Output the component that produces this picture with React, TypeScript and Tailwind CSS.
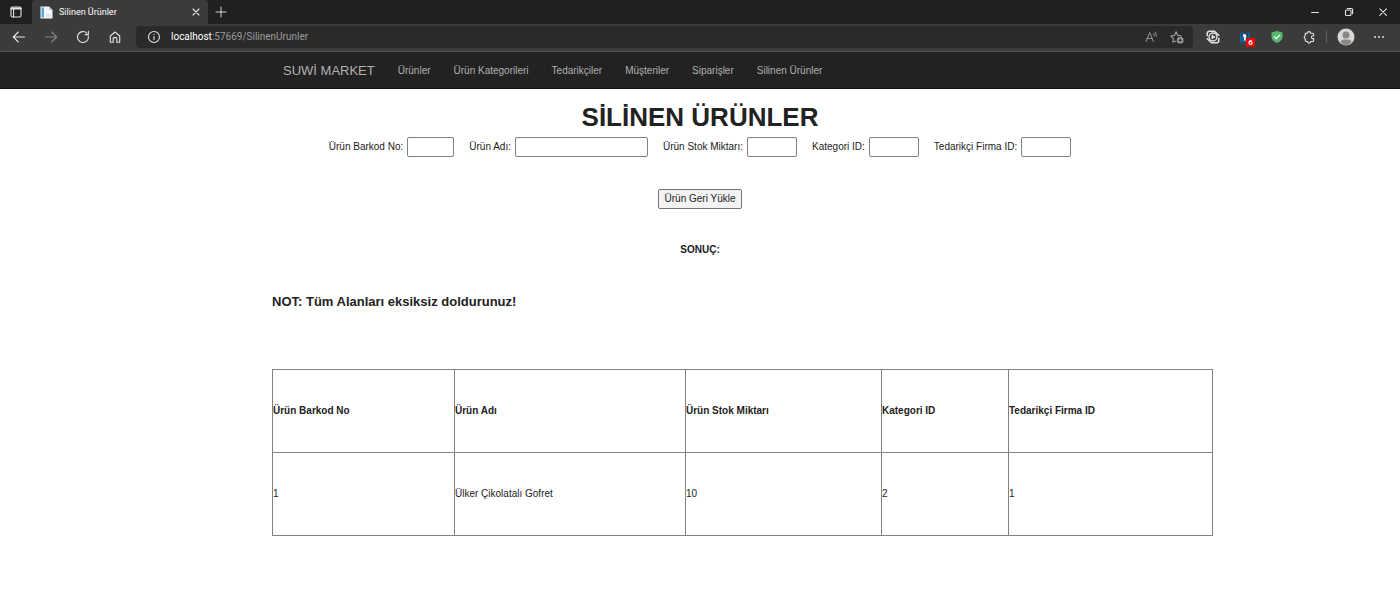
import type { ReactNode } from "react";

const navLinks = ["Ürünler", "Ürün Kategorileri", "Tedarikçiler", "Müşteriler", "Siparişler", "Silinen Ürünler"];

const fields = [
  { id: "barkod", label: "Ürün Barkod No:", width: "w-[47px]" },
  { id: "ad", label: "Ürün Adı:", width: "w-[133px]" },
  { id: "stok", label: "Ürün Stok Miktarı:", width: "w-[50px]" },
  { id: "kategori", label: "Kategori ID:", width: "w-[50px]" },
  { id: "firma", label: "Tedarikçi Firma ID:", width: "w-[50px]" },
];

const columns = [
  { title: "Ürün Barkod No", width: "w-[182px]" },
  { title: "Ürün Adı", width: "w-[231px]" },
  { title: "Ürün Stok Miktarı", width: "w-[196px]" },
  { title: "Kategori ID", width: "w-[127px]" },
  { title: "Tedarikçi Firma ID", width: "w-[204px]" },
];

const rows = [["1", "Ülker Çikolatalı Gofret", "10", "2", "1"]];

function IconButton({ label, className = "", children }: { label: string; className?: string; children: ReactNode }) {
  return (
    <button type="button" aria-label={label} className={`flex shrink-0 items-center justify-center ${className}`}>
      {children}
    </button>
  );
}

function Stroke({ size = "size-4", color = "stroke-[#e4e4e4]", children }: { size?: string; color?: string; children: ReactNode }) {
  return (
    <svg viewBox="0 0 16 16" fill="none" strokeWidth="1.1" strokeLinecap="round" strokeLinejoin="round" className={`${size} ${color}`}>
      {children}
    </svg>
  );
}

function TabStrip() {
  return (
    <div className="flex h-6 items-stretch bg-[#202020]">
      <IconButton label="Sekme eylemleri" className="w-8">
        <Stroke>
          <rect x="3" y="3" width="10" height="10" rx="1.5" />
          <path d="M3.4 4.6h9.2" strokeWidth="2" />
          <path d="M5.6 5v8" />
        </Stroke>
      </IconButton>
      <div className="flex w-[176px] items-center rounded-t bg-[#3b3b3b] pr-1 pl-2">
        <svg viewBox="0 0 13 13" className="size-[13px] shrink-0">
          <path d="M0.5 0.5h8.5l3.5 3.5v8.5h-12z" fill="#f6f7fa" />
          <path d="M1.5 1.5h2.500v10h-2.500z" fill="#58a6e0" />
          <path d="M9 0.5v3.5h3.5z" fill="#b9c6da" />
          <path d="M6 8h5v3h-5z" fill="#dfe3ee" />
        </svg>
        <span className="ml-1.5 flex-1 text-[9px] text-white">Silinen Ürünler</span>
        <IconButton label="Sekmeyi kapat" className="size-4">
          <Stroke>
            <path d="M5 5l6 6M11 5l-6 6" />
          </Stroke>
        </IconButton>
      </div>
      <IconButton label="Yeni sekme" className="w-[26px]">
        <Stroke>
          <path d="M8 3v10M3 8h10" strokeWidth="0.9" />
        </Stroke>
      </IconButton>
      <div className="ml-auto flex">
        <IconButton label="Simge durumuna küçült" className="w-[34px]">
          <Stroke>
            <path d="M4.5 8.5h7" />
          </Stroke>
        </IconButton>
        <IconButton label="Geri yükle" className="w-[34px]">
          <Stroke>
            <rect x="4.5" y="6" width="5.5" height="5.5" rx="1" />
            <path d="M6.3 4.5h4a1.3 1.3 0 0 1 1.3 1.3v4" />
          </Stroke>
        </IconButton>
        <IconButton label="Kapat" className="w-[34px]">
          <Stroke>
            <path d="M4.8 4.8l6.6 6.6M11.4 4.8l-6.6 6.6" />
          </Stroke>
        </IconButton>
      </div>
    </div>
  );
}

function Toolbar() {
  return (
    <div className="flex h-7 items-center border-b border-[#555555] bg-[#3b3b3b] pr-[13px] pb-px">
      <div className="flex w-[136px] shrink-0 items-center gap-4 pl-[11px]">
        <IconButton label="Geri">
          <Stroke>
            <path d="M13.5 8h-11M7.3 3L2.3 8l5 5" />
          </Stroke>
        </IconButton>
        <IconButton label="İleri">
          <Stroke color="stroke-[#858585]">
            <path d="M2.5 8h11M8.7 3l5 5l-5 5" />
          </Stroke>
        </IconButton>
        <IconButton label="Yenile">
          <Stroke>
            <path d="M13.4 7.2A5.5 5.5 0 1 1 11.8 4.1M13.4 2.4v3.2h-3.2" />
          </Stroke>
        </IconButton>
        <IconButton label="Giriş sayfası">
          <Stroke>
            <path d="M3.3 7L8 3l4.7 4v6.2H9.8V9.4a.8.8 0 0 0-.8-.8H7a.8.8 0 0 0-.8.8v3.8H3.3z" />
          </Stroke>
        </IconButton>
      </div>
      <div className="flex h-[22px] flex-1 items-center rounded-sm bg-[#2a2a2a] pr-2 pl-[10px]">
        <Stroke>
          <circle cx="8" cy="8" r="5.5" />
          <path d="M8 7.5v3M8 5.4v.1" />
        </Stroke>
        <p className="ml-[9px] flex-1 text-[10px] text-[#9b9b9b]">
          <span className="text-white">localhost</span>:57669/SilinenUrunler
        </p>
        <div className="flex gap-[10px]">
          <IconButton label="Sesli oku">
            <Stroke color="stroke-[#a0a0a0]">
              <path d="M3 12.5L6.7 3.5l3.7 9M4.3 9.5H9M10.5 4.6q1 1 .8 2.4M12 3q1.8 1.8 1.3 4.3" strokeWidth="0.9" />
            </Stroke>
          </IconButton>
          <IconButton label="Sık kullanılanlara ekle">
            <Stroke color="stroke-[#a0a0a0]">
              <path d="M7 12L3.9 13.3l.5-3.7L1.8 7l3.7-.6L7.1 2.800l1.7 3.600 3.7.6" />
              <circle cx="11.2" cy="11.2" r="2.7" className="fill-[#a0a0a0]" />
              <path d="M11.2 9.8v2.8M9.8 11.2h2.8" stroke="#2a2a2a" />
            </Stroke>
          </IconButton>
        </div>
      </div>
      <div className="ml-3 flex items-center gap-4">
        <IconButton label="Video uzantısı">
          <Stroke>
            <path d="M2.200 6.800V4.500A2.300 2.300 0 0 1 4.500 2.200H9.500L13.800 6.200M13.800 9.200V11.500A2.300 2.300 0 0 1 11.500 13.800H6.500L2.200 9.800" strokeWidth="1.500" />
            <circle cx="8" cy="8" r="4" strokeWidth="1.400" />
            <path d="M7.100 6.400v3.200l2.600-1.600z" fill="#e4e4e4" />
          </Stroke>
        </IconButton>
        <IconButton label="Parola uzantısı, 6 bildirim" className="relative">
          <svg viewBox="0 0 16 16" className="size-4">
            <path d="M3 5.500l1.500-2.500 2 1.200h3L11.500 3l1.500 2.500V13.500H3z" fill="#155f96" />
            <path d="M4.500 5h6.500v3h-6.500z" fill="#123a5c" />
            <path d="M7.800 5.200a1.600 1.600 0 0 1 1 2.900V11.500H7V8.300a1.600 1.600 0 0 1 .8-3.100z" fill="#ffffff" />
          </svg>
          <span className="absolute top-[9px] left-[9px] flex size-[9px] items-center justify-center rounded-[1px] bg-[#f40000] text-[8px] leading-none font-bold text-white">
            6
          </span>
        </IconButton>
        <IconButton label="Koruma uzantısı">
          <svg viewBox="0 0 16 16" className="size-4">
            <path d="M8 2l5.500 1.500v4.500q0 3.500-5.500 6Q2.500 11.500 2.500 8V3.500z" fill="#56b870" />
            <path d="M5.300 7.500l2 2.200 3.600-3.900" fill="none" stroke="#ffffff" strokeWidth="1.200" />
          </svg>
        </IconButton>
        <IconButton label="Uzantılar">
          <Stroke>
            <path d="M4.300 4.200h2.200a1.600 1.600 0 0 1 3.200 0h1.700a1.300 1.300 0 0 1 1.300 1.300V6.800h-.8a1.400 1.400 0 0 0 0 2.800h.8v1.600a1.300 1.300 0 0 1-1.300 1.300H9.700a1.600 1.600 0 0 1-3.200 0H5.600a1.300 1.300 0 0 1-1.300-1.300V9.700a1.500 1.500 0 0 1 0-2.900z" />
          </Stroke>
        </IconButton>
      </div>
      <div className="ml-[9px] h-3 w-px bg-[#626262]" />
      <IconButton label="Profil" className="ml-[10px]">
        <svg viewBox="0 0 18 18" className="size-[18px]">
          <circle cx="9" cy="9" r="8.500" fill="#d9d7d5" />
          <circle cx="9" cy="7" r="3.500" fill="#8a8785" />
          <path d="M3.500 13.500q1-2 3-2h5q2 0 3 2q-2 3.500-5.500 3.500t-5.500-3.500z" fill="#8a8785" />
        </svg>
      </IconButton>
      <IconButton label="Ayarlar ve daha fazlası" className="ml-4">
        <Stroke>
          <path d="M4 8h.1M8 8h.1M12 8h.1" strokeWidth="1.800" />
        </Stroke>
      </IconButton>
    </div>
  );
}

function Navbar() {
  return (
    <nav className="border-b border-[#101010] bg-[#222222]">
      <div className="mx-auto flex h-9 max-w-[854px] items-center pt-px pl-[10px] text-[10px] text-[#b0b0b0]">
        <a href="#" className="mr-[23px] text-[13px]">SUWİ MARKET</a>
        <ul className="flex gap-[23px]">
          {navLinks.map((link) => (
            <li key={link}>
              <a href="#">{link}</a>
            </li>
          ))}
        </ul>
      </div>
    </nav>
  );
}

export default function App() {
  return (
    <div className="min-h-screen bg-white font-['Liberation_Sans',Arial,sans-serif] text-[10px] leading-4 text-[#222222]">
      <header>
        <div className="font-[Roboto,'Segoe_UI',sans-serif]">
          <TabStrip />
          <Toolbar />
        </div>
        <Navbar />
      </header>
      <main className="mx-auto max-w-[856px] pt-3">
        <h1 className="text-center text-[26px] leading-8 font-bold">SİLİNEN ÜRÜNLER</h1>
        <form className="flex flex-col items-center pt-1">
          <div className="flex gap-[15px]">
            {fields.map((field) => (
              <div key={field.id} className="flex items-center gap-1">
                <label htmlFor={field.id} className="whitespace-nowrap">{field.label}</label>
                <input id={field.id} type="text" className={`h-5 rounded-[2px] border border-[#808080] bg-white px-1 ${field.width}`} />
              </div>
            ))}
          </div>
          <button type="button" className="mt-8 h-5 rounded-[2px] border border-[#767676] bg-[#f3f3f3] px-1.5 text-[#222222]">
            Ürün Geri Yükle
          </button>
        </form>
        <p className="mt-[33px] text-center font-bold">SONUÇ:</p>
        <p className="mt-9 text-[13px] font-bold">NOT: Tüm Alanları eksiksiz doldurunuz!</p>
        <table className="mt-[59px] w-[940px] table-fixed border-collapse text-left">
          <thead>
            <tr>
              {columns.map((column) => (
                <th key={column.title} className={`h-[83px] border border-[#808080] font-bold ${column.width}`}>
                  {column.title}
                </th>
              ))}
            </tr>
          </thead>
          <tbody>
            {rows.map((row) => (
              <tr key={row[0]}>
                {row.map((cell, index) => (
                  <td key={index} className="h-[83px] border border-[#808080]">{cell}</td>
                ))}
              </tr>
            ))}
          </tbody>
        </table>
      </main>
    </div>
  );
}
